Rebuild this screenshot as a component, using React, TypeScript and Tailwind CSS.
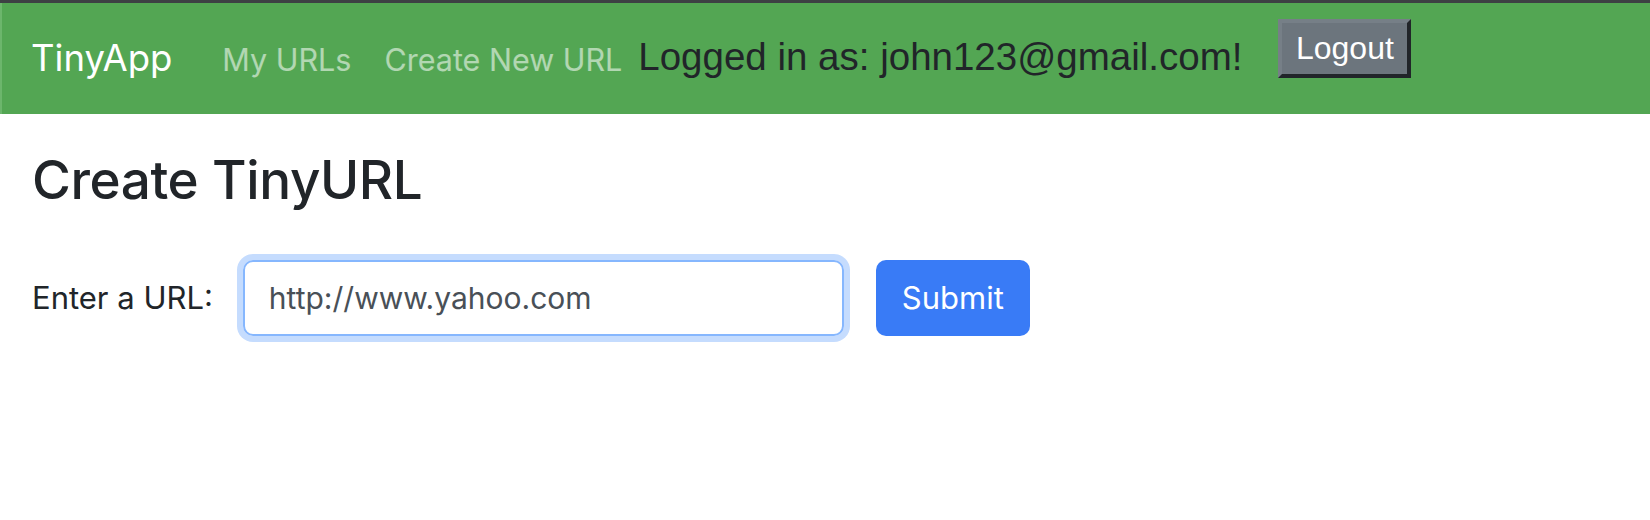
import React from 'react';

const App = () => {
    return (
        <div className="w-[1650px] h-[520px] bg-white" style={{ fontFamily: 'Inter, "Liberation Sans", sans-serif' }}>
            {/* Navbar */}
            <div className="border-t-[3px] border-[#3d4043]">
                <nav className="h-[111px] bg-[#53a653] border-l-2 border-[#6cb66c] flex items-start pl-[29px]">
                    <a className="mt-[37px] text-[36.5px] leading-none text-white">TinyApp</a>
                    <a className="mt-[42px] ml-[50px] text-[30.5px] leading-none text-white/55">My URLs</a>
                    <a className="mt-[42px] ml-[33px] text-[30.5px] leading-none text-white/55">Create New URL</a>
                    <span
                        className="mt-[35px] ml-[16px] text-[38.5px] leading-none text-[#212529]"
                        style={{ fontFamily: '"Liberation Sans", Arial, sans-serif' }}
                    >
                        Logged in as: john123@gmail.com!
                    </span>
                    <button
                        className="mt-[16px] ml-[36px] w-[133px] h-[59px] bg-[#6c757d] text-white text-[32px] leading-none border-4 border-t-[#767f87] border-l-[#767f87] border-r-[#212529] border-b-[#212529] pb-[2px]"
                        style={{ fontFamily: '"Liberation Sans", Arial, sans-serif' }}
                    >
                        Logout
                    </button>
                </nav>
            </div>

            {/* Main */}
            <main className="pl-[32px]">
                <h1 className="mt-[40px] text-[53px] leading-none font-medium text-[#212529] tracking-[-0.4px]">
                    Create TinyURL
                </h1>
                <form className="mt-[53px] flex items-center" onSubmit={(e) => e.preventDefault()}>
                    <label className="text-[31px] text-[#212529]">Enter a URL:</label>
                    <input
                        type="text"
                        defaultValue="http://www.yahoo.com"
                        className="ml-[30px] w-[601px] h-[76px] rounded-[10px] border-2 border-[#86b7fe] shadow-[0_0_0_6px_#c5dcfe] pl-[24px] text-[30px] text-[#495057] outline-none"
                    />
                    <button
                        type="submit"
                        className="ml-[32px] w-[154px] h-[76px] rounded-[10px] bg-[#397bf6] text-white text-[31px]"
                    >
                        Submit
                    </button>
                </form>
            </main>
        </div>
    );
};

export default App;
